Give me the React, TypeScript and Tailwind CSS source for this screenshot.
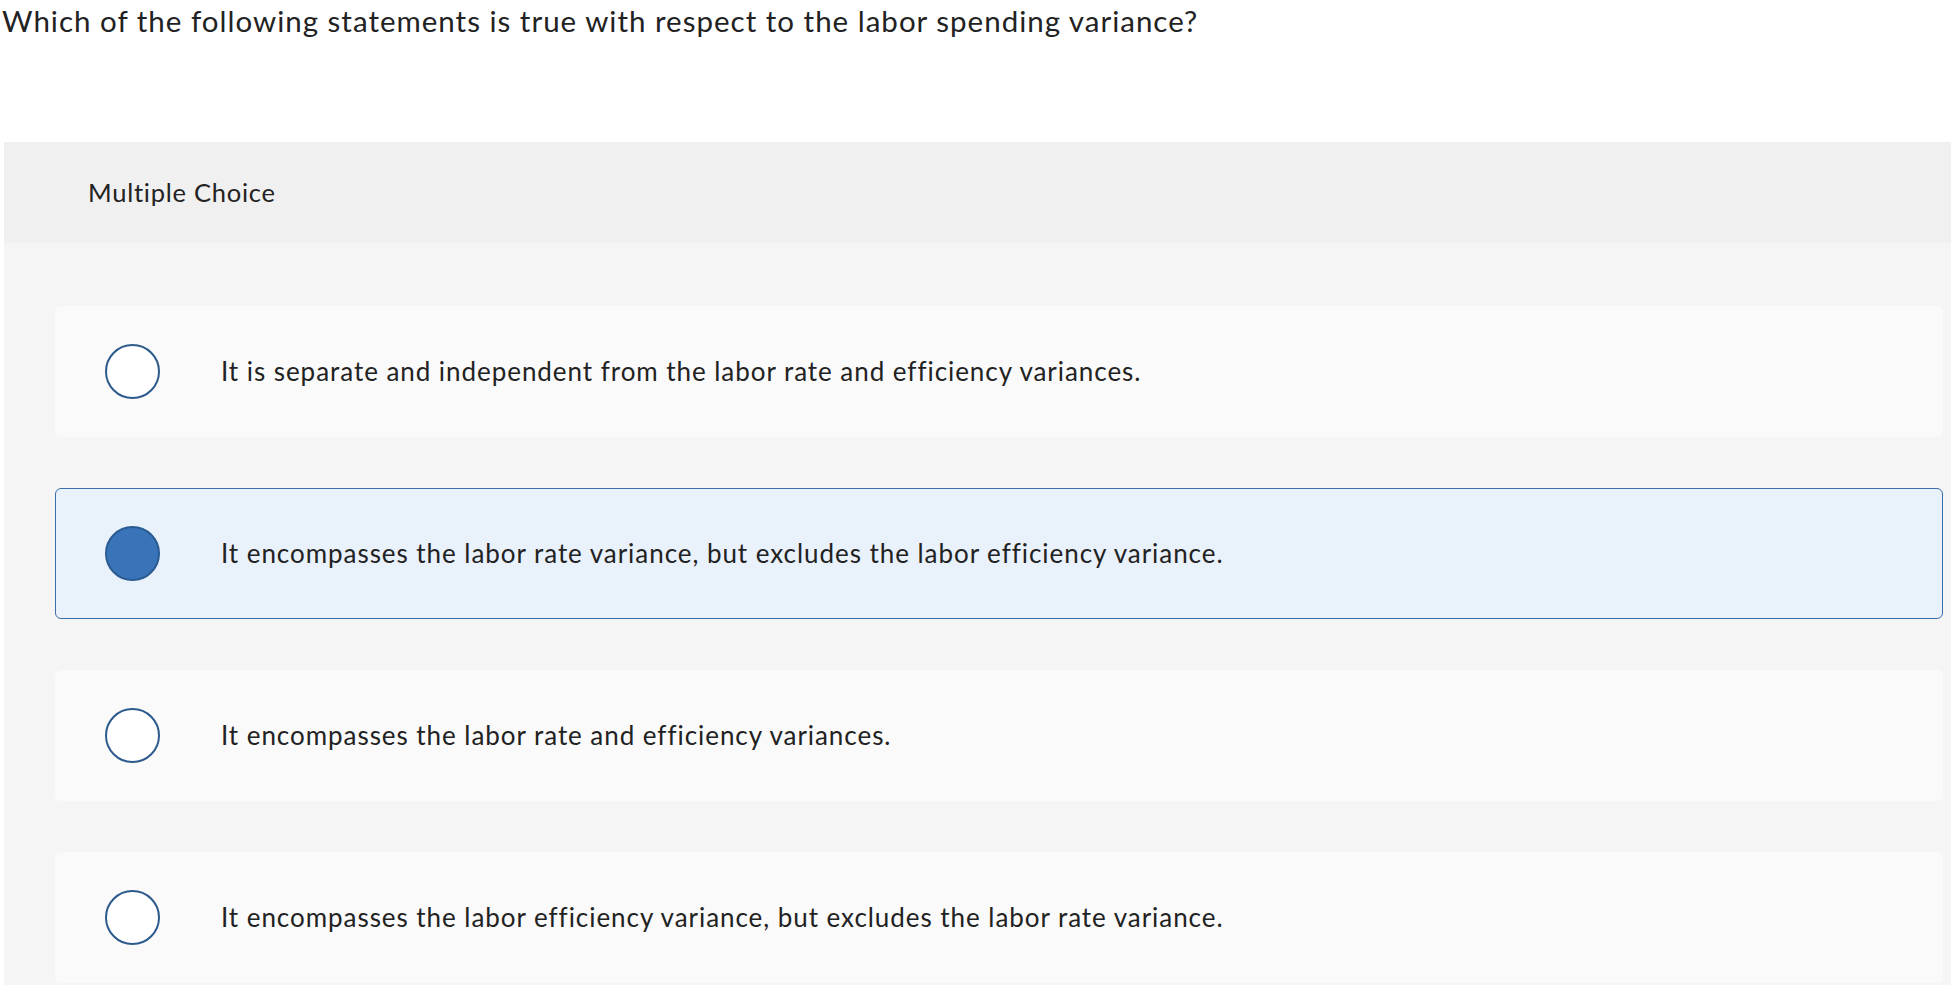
const options = [
  "It is separate and independent from the labor rate and efficiency variances.",
  "It encompasses the labor rate variance, but excludes the labor efficiency variance.",
  "It encompasses the labor rate and efficiency variances.",
  "It encompasses the labor efficiency variance, but excludes the labor rate variance.",
];

const selected = 1;

export default function App() {
  return (
    <div
      className="min-h-screen bg-white text-[#222] [font-variant-ligatures:none]"
      style={{ fontFamily: "Lato, 'Open Sans', sans-serif" }}
    >
      {/* Question */}
      <h1 className="h-[142px] pl-[2px] pt-[1px] text-[29.5px] leading-[40px] font-normal tracking-[1px]">
        Which of the following statements is true with respect to the labor spending variance?
      </h1>

      <div className="ml-[4px]">
        {/* Header */}
        <div className="flex h-[101px] items-center bg-[#f0f0f0] pl-[84px] text-[25.5px] tracking-[0.75px]">
          Multiple Choice
        </div>

        {/* Choices */}
        <div className="flex flex-col gap-[51px] bg-[#f5f5f5] pb-10 pl-[51px] pr-[8px] pt-[63px]">
          {options.map((text, i) => {
            const isSel = i === selected;
            return (
              <div
                key={i}
                className={
                  isSel
                    ? "flex h-[131px] items-center rounded-[6px] border-[1.5px] border-[#3a6fa8] bg-[#e9f1fb] pl-[49px]"
                    : "flex h-[131px] items-center rounded-[6px] bg-[#fafafa] pl-[50px]"
                }
              >
                <span
                  className={
                    isSel
                      ? "h-[55px] w-[55px] shrink-0 rounded-full border-2 border-[#2a5b92] bg-[#3a74b8]"
                      : "h-[55px] w-[55px] shrink-0 rounded-full border-2 border-[#2c5a8c] bg-white"
                  }
                />
                <span className="ml-[61px] text-[26px] tracking-[0.95px]">{text}</span>
              </div>
            );
          })}
        </div>
      </div>
    </div>
  );
}
